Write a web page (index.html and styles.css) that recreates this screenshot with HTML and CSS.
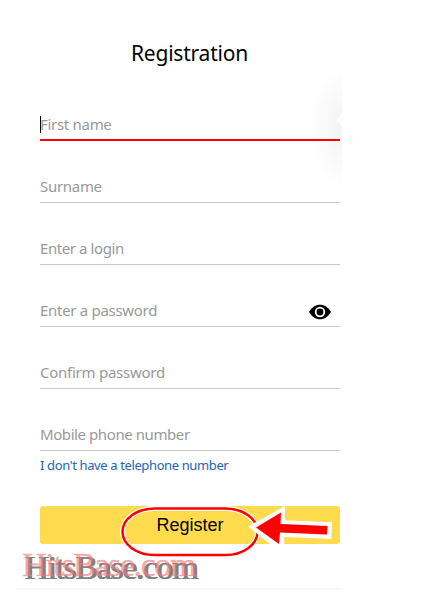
FILE: index.html
```html
<!DOCTYPE html>
<html lang="en">
<head>
<meta charset="utf-8">
<title>Registration</title>
<link rel="stylesheet" href="styles.css">
</head>
<body>
<main class="page">
  <div class="hint-shadow"></div>
  <h1 class="title">Registration</h1>
  <form class="form">
    <div class="field active"><span class="caret"></span><span class="label first">First name</span></div>
    <div class="field"><span class="label surname">Surname</span></div>
    <div class="field"><span class="label login">Enter a login</span></div>
    <div class="field"><span class="label password">Enter a password</span>
      <svg class="eye" width="22" height="16" viewBox="0 0 22 16"><path d="M0 8C4 1.800 7.500 .8 11 .8S18 1.800 22 8C18 14.200 14.500 15.200 11 15.200S4 14.200 0 8Z"/><circle cx="11" cy="8" r="4.300" fill="#000" stroke="#fff" stroke-width="1.800"/></svg>
    </div>
    <div class="field"><span class="label confirm">Confirm password</span></div>
    <div class="field"><span class="label phone">Mobile phone number</span></div>
    <a class="link">I don't have a telephone number</a>
    <div class="button">Register</div>
  </form>
  <div class="watermark">HitsBase.com</div>
  <div class="divider"></div>
  <svg class="marks" width="224" height="66" viewBox="116 500 224 66">
    <rect class="ring-edge" x="122.500" y="508.500" width="135" height="46.500" rx="32" ry="23.250"/>
    <rect class="ring" x="122.500" y="508.500" width="135" height="46.500" rx="32" ry="23.250"/>
    <path class="arrow-edge" d="M248 526.500L285 506V520.300L332 522.300L331.300 539L284.300 537V554L279 551.300Z"/>
    <path class="arrow" d="M256 527.500L281 512.500L280.500 524L327.500 526L327 534.500L280 532.500L279 544Z"/>
  </svg>
</main>
</body>
</html>
```
FILE: styles.css
```css
* { box-sizing: border-box; }
body { margin: 0; background: #fff; font-family: "Noto Sans", sans-serif; }
.page { position: relative; width: 427px; height: 609px; padding-top: 39px; overflow: hidden; }
.title { margin: 0 0 0 131px; height: 40px; font-size: 21px; line-height: 29px; font-weight: 400; letter-spacing: -.22px; color: #000; white-space: nowrap; }
.form { position: relative; width: 300px; margin-left: 40px; }
.field { position: relative; height: 62px; border-bottom: 1px solid #c9c9c9; display: flex; align-items: flex-end; padding-bottom: 5px; }
.field.active { border-bottom: 2px solid #f00; padding-bottom: 4px; }
.label { font-size: 15px; line-height: 22px; color: #999; white-space: nowrap; letter-spacing: -.3px; }
.login, .phone { letter-spacing: -.42px; }
.confirm { letter-spacing: -.25px; }
.caret { position: absolute; left: 0; top: 37px; width: 1px; height: 17px; background: #000; }
.eye { position: absolute; right: 9px; top: 39px; }
.link { display: block; height: 55px; padding-top: 4px; font-size: 13px; line-height: 20px; letter-spacing: -.38px; color: #2763b5; white-space: nowrap; }
.button { height: 38px; border-radius: 3px; background: #ffdb4d; font: 18px/38px "Liberation Sans", sans-serif; text-align: center; color: #000; }
.watermark { margin-left: 22px; height: 44px; font: 34px/41px "Liberation Serif", serif; letter-spacing: -1.4px; color: rgba(240, 125, 125, .65); -webkit-text-stroke: .5px rgba(240, 125, 125, .5); text-shadow: 2px 3px 0 #808080, 3px 3px 0 #808080; white-space: nowrap; }
.divider { width: 326px; height: 2px; margin-left: 16px; background: #f8f8f8; }
.hint-shadow { position: absolute; left: 302px; top: 65px; width: 40px; height: 125px; background: radial-gradient(ellipse 32px 60px at 100% 50%, #f3f3f3, #f9f9f9 50%, #fff); }
.hint-shadow::after { content: ""; position: absolute; right: 0; top: 49px; width: 6px; height: 12px; background: #fff; clip-path: polygon(0 50%, 100% 0, 100% 100%); }
.marks { position: absolute; left: 116px; top: 500px; }
.ring-edge { fill: none; stroke: #fff; stroke-width: 5; }
.ring { fill: none; stroke: #f00; stroke-width: 2.5; }
.arrow-edge { fill: #fff; }
.arrow { fill: #f00; }
```
